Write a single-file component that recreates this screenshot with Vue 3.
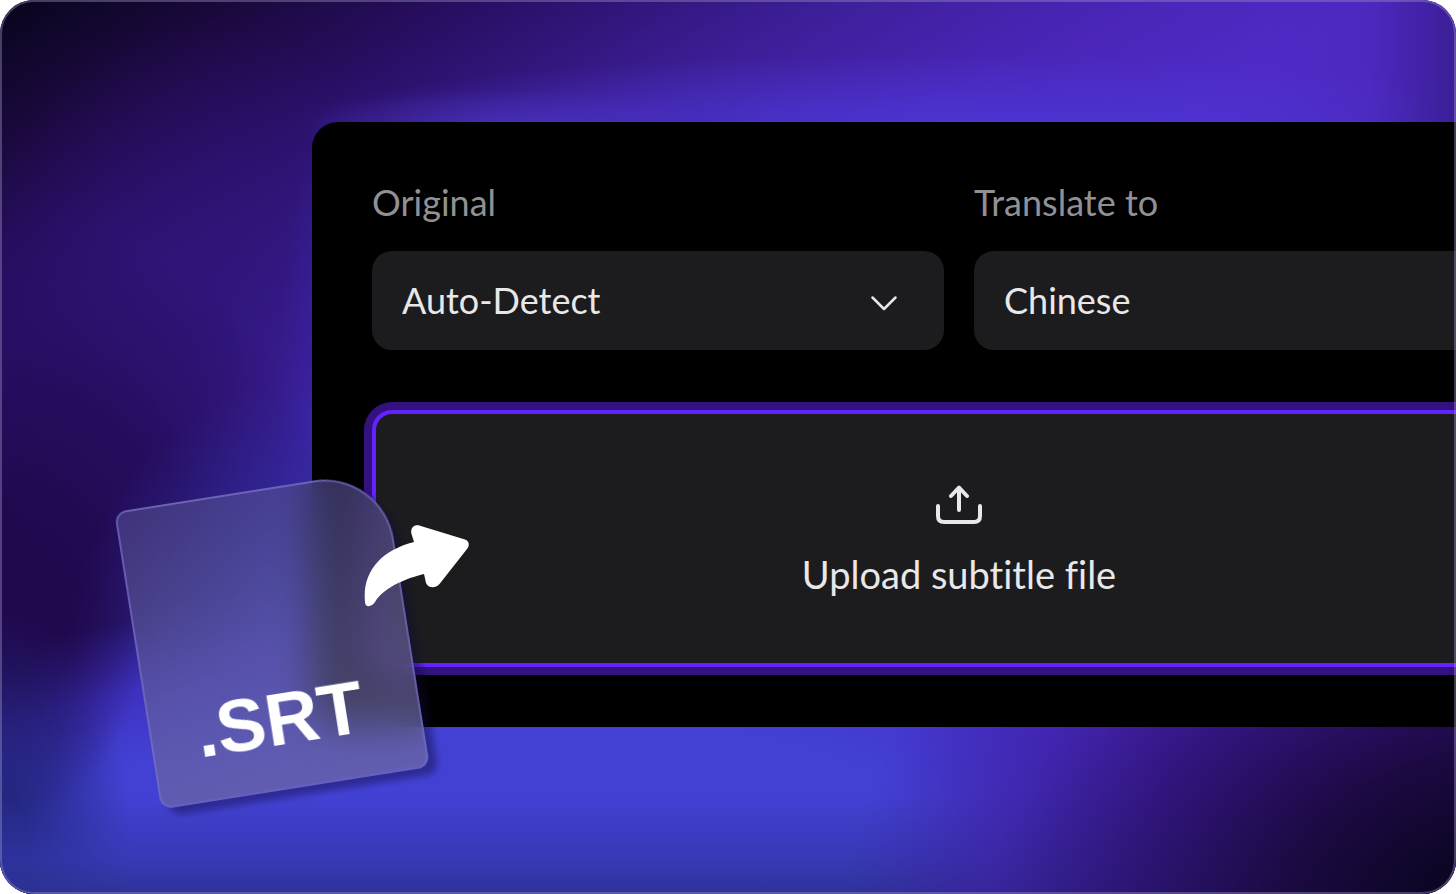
<script setup>
import { ref } from 'vue'

const original = ref('Auto-Detect')
const target = ref('Chinese')
const originals = ['Auto-Detect', 'English', 'Chinese', 'Spanish']
const targets = ['Chinese', 'English', 'Spanish']
</script>

<template>
  <main class="frame">
    <div class="backdrop" aria-hidden="true"></div>

    <section class="panel">
      <div class="languages">
        <div class="field">
          <label for="original">Original</label>
          <div class="select-wrap">
            <select id="original" v-model="original">
              <option v-for="name in originals" :key="name">{{ name }}</option>
            </select>
            <svg class="chevron" viewBox="0 0 28 16" aria-hidden="true">
              <path d="M2.500 2.500 14 14 25.500 2.500" />
            </svg>
          </div>
        </div>
        <div class="field">
          <label for="target">Translate to</label>
          <div class="select-wrap">
            <select id="target" v-model="target">
              <option v-for="name in targets" :key="name">{{ name }}</option>
            </select>
            <svg class="chevron" viewBox="0 0 28 16" aria-hidden="true">
              <path d="M2.500 2.500 14 14 25.500 2.500" />
            </svg>
          </div>
        </div>
      </div>

      <button class="upload" type="button">
        <svg class="upload-icon" viewBox="0 0 48 40" aria-hidden="true">
          <path d="M3 21V31Q3 37 9 37H39Q45 37 45 31V21" />
          <path d="M24 25V3M16 11 24 2.500 32 11" />
        </svg>
        <span>Upload subtitle file</span>
      </button>
    </section>

    <div class="file">
      <span>.SRT</span>
    </div>
    <svg class="arrow" viewBox="0 0 106 84" aria-hidden="true">
      <path d="M50 17L47.500 9C46 3 50 -1 56 .7L101 14.500C105 16 106 20 103 24L75.500 59C71 64 64 63 62 58L60 49C44 53 21 61 11 77C8 82 1 83 1 77C-2 46 18 25 50 17Z" />
    </svg>
  </main>
</template>

<style>
body {
  margin: 0;
  background: #fff;
}
</style>

<style scoped>
.frame {
  position: relative;
  box-sizing: border-box;
  min-height: 100vh;
  padding: 122px 0 120px 312px;
  overflow: hidden;
  border-radius: 34px;
  background: #2a1070;
  font-family: Lato, "Open Sans", sans-serif;
}

.frame::after {
  content: "";
  position: absolute;
  inset: 0;
  border: 2px solid rgba(150, 145, 190, 0.42);
  border-radius: 34px;
  pointer-events: none;
}

.backdrop {
  position: absolute;
  inset: 0;
  background:
    radial-gradient(ellipse 46% 52% at 104% 102%, #0c0522 12%, rgba(26, 8, 62, 0.95) 35%, rgba(44, 16, 110, 0.85) 58%, rgba(62, 28, 155, 0.6) 78%, rgba(76, 44, 196, 0) 100%),
    linear-gradient(270deg, rgba(52, 26, 135, 0.75) 0%, rgba(70, 34, 170, 0.25) 6%, rgba(70, 34, 170, 0) 13%),
    linear-gradient(0deg, rgba(44, 50, 146, 0.9) 0%, rgba(50, 54, 168, 0.7) 4%, rgba(60, 60, 200, 0) 11%),
    radial-gradient(ellipse 9% 26% at 0% 94%, rgba(34, 38, 124, 0.95) 20%, rgba(36, 48, 150, 0) 100%),
    radial-gradient(ellipse 10% 22% at 0% 70%, rgba(32, 8, 78, 1) 15%, rgba(34, 8, 84, 0) 100%),
    radial-gradient(ellipse 60% 30% at 34% 94%, #4241d4 50%, rgba(66, 54, 206, 0.8) 70%, rgba(56, 44, 190, 0) 92%),
    radial-gradient(ellipse 18% 36% at 22% 78%, rgba(60, 62, 204, 1) 15%, rgba(46, 50, 166, 0.7) 50%, rgba(42, 36, 150, 0) 100%),
    radial-gradient(ellipse 25% 46% at 0% 70%, #1f0848 10%, rgba(36, 12, 90, 0.9) 60%, rgba(36, 12, 90, 0) 100%),
    radial-gradient(ellipse 5% 34% at 24% 44%, rgba(56, 40, 176, 0.7) 0%, rgba(56, 34, 160, 0) 100%),
    radial-gradient(ellipse 46% 8% at 66% 14%, rgba(76, 54, 212, 0.9) 0%, rgba(76, 52, 212, 0) 100%),
    radial-gradient(ellipse 14% 4% at 35% 14%, rgba(76, 54, 190, 0.6) 0%, rgba(76, 52, 190, 0) 100%),
    radial-gradient(ellipse 16% 34% at 14% 36%, rgba(45, 20, 118, 0.8) 0%, rgba(45, 20, 118, 0) 100%),
    linear-gradient(150deg, #08041a 0%, #0f0628 3%, #1c0941 9%, #2a1068 17%, #3d1f99 28%, #4925b6 37%, #4f2ac6 46%);
}

.panel {
  position: relative;
  box-sizing: border-box;
  margin-right: -150px;
  padding: 60px;
  border-radius: 26px;
  background: #000;
}

.languages {
  display: grid;
  grid-template-columns: 1fr 1fr;
  gap: 30px;
}

.field {
  display: flex;
  flex-direction: column;
  gap: 29px;
}

label {
  color: #919094;
  font-size: 36px;
  line-height: 40px;
}

.select-wrap {
  position: relative;
}

select {
  display: block;
  box-sizing: border-box;
  width: 100%;
  height: 99px;
  padding: 0 90px 2px 30px;
  border: 0;
  border-radius: 20px;
  outline: 0;
  appearance: none;
  background: #1c1c1e;
  color: #e8e8e9;
  font: 36px/40px Lato, "Open Sans", sans-serif;
}

.chevron {
  position: absolute;
  top: 44px;
  right: 46px;
  width: 28px;
  height: 16px;
  fill: none;
  stroke: #e8e8e9;
  stroke-width: 2.500;
  stroke-linecap: round;
  stroke-linejoin: round;
  pointer-events: none;
}

.upload {
  display: flex;
  flex-direction: column;
  align-items: center;
  justify-content: center;
  gap: 29px;
  box-sizing: border-box;
  width: 100%;
  height: 257px;
  margin-top: 60px;
  padding: 2px 0 0;
  border: 4px solid #6323ff;
  border-radius: 20px;
  background: #1c1c1e;
  box-shadow: 0 0 0 8px #33117f;
  color: #e8e8e9;
  font: 38px/40px Lato, "Open Sans", sans-serif;
  font-variant-ligatures: none;
}

.upload-icon {
  width: 48px;
  height: 40px;
  fill: none;
  stroke: #e8e8e9;
  stroke-width: 4;
  stroke-linecap: round;
  stroke-linejoin: round;
}

.file {
  position: absolute;
  top: 489px;
  left: 136px;
  display: flex;
  align-items: flex-end;
  justify-content: center;
  box-sizing: border-box;
  width: 272px;
  height: 301px;
  padding: 0 10px 26px 0;
  border: 2px solid rgba(120, 110, 205, 0.6);
  border-radius: 12px 70px 12px 12px;
  background: linear-gradient(170deg, rgba(84, 80, 144, 0.54), rgba(112, 108, 160, 0.68));
  box-shadow: 8px 8px 6px rgba(15, 10, 55, 0.4);
  backdrop-filter: blur(20px);
  transform: rotate(-9deg);
  color: #fff;
  font-family: "Liberation Sans", Arial, sans-serif;
  font-size: 74px;
  font-weight: 700;
  line-height: 84px;
}

.arrow {
  position: absolute;
  top: 525px;
  left: 364px;
  width: 106px;
  height: 84px;
  fill: #fff;
}
</style>
